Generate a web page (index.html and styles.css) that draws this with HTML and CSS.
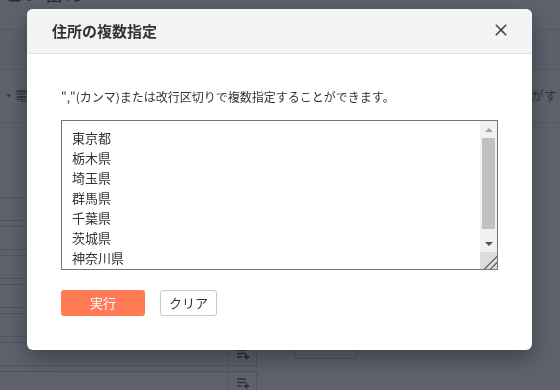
FILE: index.html
```html
<!DOCTYPE html>
<html lang="ja">
<head>
<meta charset="utf-8">
<title>住所の複数指定</title>
<link rel="stylesheet" href="styles.css">
</head>
<body>
<div class="page">
  <div class="page-head"><span class="page-title">ピン留め</span></div>
  <div class="page-tabs"></div>
  <div class="page-note">
    <span class="note-left">・電話番</span>
    <span class="note-right">ながす</span>
  </div>
  <div class="page-form">
    <div class="form-left">
      <div class="row"><div class="row-input"></div><div class="row-icon"><svg viewBox="0 0 14 12" width="14" height="12"><path d="M1 2h9M1 5.5h9M1 9h5" stroke="#666" stroke-width="1.6" fill="none"/><path d="M10.5 6.5v5M8 9h5" stroke="#666" stroke-width="1.8" fill="none"/></svg></div></div>
      <div class="row"><div class="row-input"></div><div class="row-icon"><svg viewBox="0 0 14 12" width="14" height="12"><path d="M1 2h9M1 5.5h9M1 9h5" stroke="#666" stroke-width="1.6" fill="none"/><path d="M10.5 6.5v5M8 9h5" stroke="#666" stroke-width="1.8" fill="none"/></svg></div></div>
      <div class="row"><div class="row-input"></div><div class="row-icon"><svg viewBox="0 0 14 12" width="14" height="12"><path d="M1 2h9M1 5.5h9M1 9h5" stroke="#666" stroke-width="1.6" fill="none"/><path d="M10.5 6.5v5M8 9h5" stroke="#666" stroke-width="1.8" fill="none"/></svg></div></div>
      <div class="row"><div class="row-input"></div><div class="row-icon"><svg viewBox="0 0 14 12" width="14" height="12"><path d="M1 2h9M1 5.5h9M1 9h5" stroke="#666" stroke-width="1.6" fill="none"/><path d="M10.5 6.5v5M8 9h5" stroke="#666" stroke-width="1.8" fill="none"/></svg></div></div>
      <div class="row"><div class="row-input"></div><div class="row-icon"><svg viewBox="0 0 14 12" width="14" height="12"><path d="M1 2h9M1 5.5h9M1 9h5" stroke="#666" stroke-width="1.6" fill="none"/><path d="M10.5 6.5v5M8 9h5" stroke="#666" stroke-width="1.8" fill="none"/></svg></div></div>
      <div class="row"><div class="row-input"></div><div class="row-icon"><svg viewBox="0 0 14 12" width="14" height="12"><path d="M1 2h9M1 5.5h9M1 9h5" stroke="#666" stroke-width="1.6" fill="none"/><path d="M10.5 6.5v5M8 9h5" stroke="#666" stroke-width="1.8" fill="none"/></svg></div></div>
      <div class="row"><div class="row-input"></div><div class="row-icon"><svg viewBox="0 0 14 12" width="14" height="12"><path d="M1 2h9M1 5.5h9M1 9h5" stroke="#666" stroke-width="1.6" fill="none"/><path d="M10.5 6.5v5M8 9h5" stroke="#666" stroke-width="1.8" fill="none"/></svg></div></div>
    </div>
    <div class="form-right"><div class="ghost-btn"></div></div>
  </div>
</div>

<div class="overlay">
  <div class="modal" role="dialog" aria-labelledby="modal-title">
    <div class="modal-header">
      <h2 class="modal-title" id="modal-title">住所の複数指定</h2>
      <button class="modal-close" type="button" aria-label="閉じる">
        <svg viewBox="0 0 12 12" width="12" height="12"><path d="M0.8 0.8L11.2 11.2M11.2 0.8L0.8 11.2" stroke="#4a4a4a" stroke-width="1.6" fill="none"/></svg>
      </button>
    </div>
    <div class="modal-body">
      <p class="modal-desc">","(カンマ)または改行区切りで複数指定することができます。</p>
      <div class="field">
        <textarea class="field-input">東京都
栃木県
埼玉県
群馬県
千葉県
茨城県
神奈川県</textarea>
        <div class="vscroll" aria-hidden="true">
          <div class="vscroll-btn vscroll-up"><span class="arrow-up"></span></div>
          <div class="vscroll-track"><div class="vscroll-thumb"></div></div>
          <div class="vscroll-btn vscroll-down"><span class="arrow-down"></span></div>
          <div class="vscroll-corner"></div>
        </div>
      </div>
      <div class="modal-actions">
        <button class="btn btn-primary" type="button">実行</button>
        <button class="btn btn-secondary" type="button">クリア</button>
      </div>
    </div>
  </div>
</div>
</body>
</html>
```

FILE: styles.css
```css
* { box-sizing: border-box; }

html, body {
  margin: 0;
  padding: 0;
  width: 560px;
  height: 390px;
  overflow: hidden;
  font-family: "Noto Sans CJK JP", "Liberation Sans", sans-serif;
  color: #333;
  background: #ffffff;
}

/* ---------- background page ---------- */
.page {
  width: 560px;
  height: 390px;
  overflow: hidden;
}

.page-head {
  height: 29px;
  display: flex;
  align-items: flex-end;
  padding-left: 4px;
  overflow: hidden;
}

.page-title {
  font-size: 20px;
  line-height: 20px;
  margin-bottom: 26px;
  color: #555;
}

.page-tabs {
  height: 41px;
  border-top: 1px solid #e6e6e6;
  border-bottom: 1px solid #dcdcdc;
  background: #fafafa;
}

.page-note {
  height: 53px;
  display: flex;
  justify-content: space-between;
  align-items: center;
  padding: 0 3px 4px 2px;
  border-bottom: 1px solid #e2e2e2;
  font-size: 13px;
  color: #777;
  white-space: nowrap;
}

.page-form {
  display: flex;
  padding-top: 74px;
}

.form-left {
  width: 258px;
  margin-left: -1px;
  display: flex;
  flex-direction: column;
  gap: 5px;
}

.row {
  height: 24px;
  display: flex;
  border: 1px solid #d6d6d6;
  background: #fff;
}

.row-input { flex: 1; }

.row-icon {
  width: 28px;
  border-left: 1px dotted #cfcfcf;
  display: flex;
  align-items: center;
  justify-content: center;
}

.form-right {
  flex: 1;
  padding: 136px 0 0 38px;
}

.ghost-btn {
  width: 62px;
  height: 26px;
  border: 1px solid #cfcfcf;
  border-radius: 3px;
  background: #fff;
}

/* ---------- overlay + modal ---------- */
.overlay {
  position: fixed;
  inset: 0;
  background: rgba(17, 24, 39, 0.68);
  padding: 9px 0 0 27px;
}

.modal {
  width: 505px;
  background: #fff;
  border-radius: 6px;
  overflow: hidden;
  box-shadow: 0 8px 22px rgba(0, 0, 0, 0.35);
}

.modal-header {
  height: 45px;
  display: flex;
  align-items: center;
  justify-content: space-between;
  padding: 0 25px 2px;
  background: #f3f4f6;
  border-bottom: 1px solid #e0e2e5;
}

.modal-title {
  margin: 0;
  font-size: 15px;
  font-weight: 700;
  line-height: 1;
  color: #333;
}

.modal-close {
  border: 0;
  padding: 0;
  background: none;
  width: 12px;
  height: 12px;
  display: flex;
  cursor: pointer;
}

.modal-body {
  padding: 34px 34px 34px;
}

.modal-desc {
  margin: 0 0 14px;
  font-size: 12px;
  line-height: 18px;
  color: #333;
}

/* textarea with classic scrollbar */
.field {
  display: flex;
  height: 150px;
  border: 1px solid #767676;
  background: #fff;
}

.field-input {
  flex: 1;
  min-width: 0;
  margin: 0;
  padding: 7px 10px 9px;
  border: 0;
  border-radius: 0;
  resize: none;
  overflow: hidden;
  outline: none;
  font-family: "Noto Sans CJK JP", "Liberation Sans", sans-serif;
  font-size: 13px;
  line-height: 20px;
  color: #333;
  background: #fff;
}

.vscroll {
  width: 17px;
  display: flex;
  flex-direction: column;
  background: #f1f1f1;
}

.vscroll-btn {
  height: 17px;
  display: flex;
  align-items: center;
  justify-content: center;
}

.arrow-up {
  width: 0;
  height: 0;
  border-left: 4px solid transparent;
  border-right: 4px solid transparent;
  border-bottom: 4px solid #a3a3a3;
}

.arrow-down {
  width: 0;
  height: 0;
  border-left: 4px solid transparent;
  border-right: 4px solid transparent;
  border-top: 4px solid #505050;
}

.vscroll-track {
  flex: 1;
  padding: 0 2px;
}

.vscroll-thumb {
  height: 91px;
  background: #c1c1c1;
}

.vscroll-corner {
  height: 17px;
  background-color: #dcdcdc;
  background-image: linear-gradient(135deg,
    transparent 0 60%, #6f6f6f 60% 65%,
    transparent 65% 78%, #6f6f6f 78% 83%,
    transparent 83%);
}

.modal-actions {
  display: flex;
  gap: 15px;
  margin-top: 20px;
}

.btn {
  height: 26px;
  padding: 0 0 1px;
  border-radius: 3px;
  font-family: "Noto Sans CJK JP", "Liberation Sans", sans-serif;
  font-size: 13px;
  line-height: 1;
  cursor: pointer;
}

.btn-primary {
  width: 84px;
  border: 0;
  background: #ff7a55;
  color: #fff;
}

.btn-secondary {
  width: 57px;
  border: 1px solid #c8c8c8;
  background: #fff;
  color: #333;
}
```
